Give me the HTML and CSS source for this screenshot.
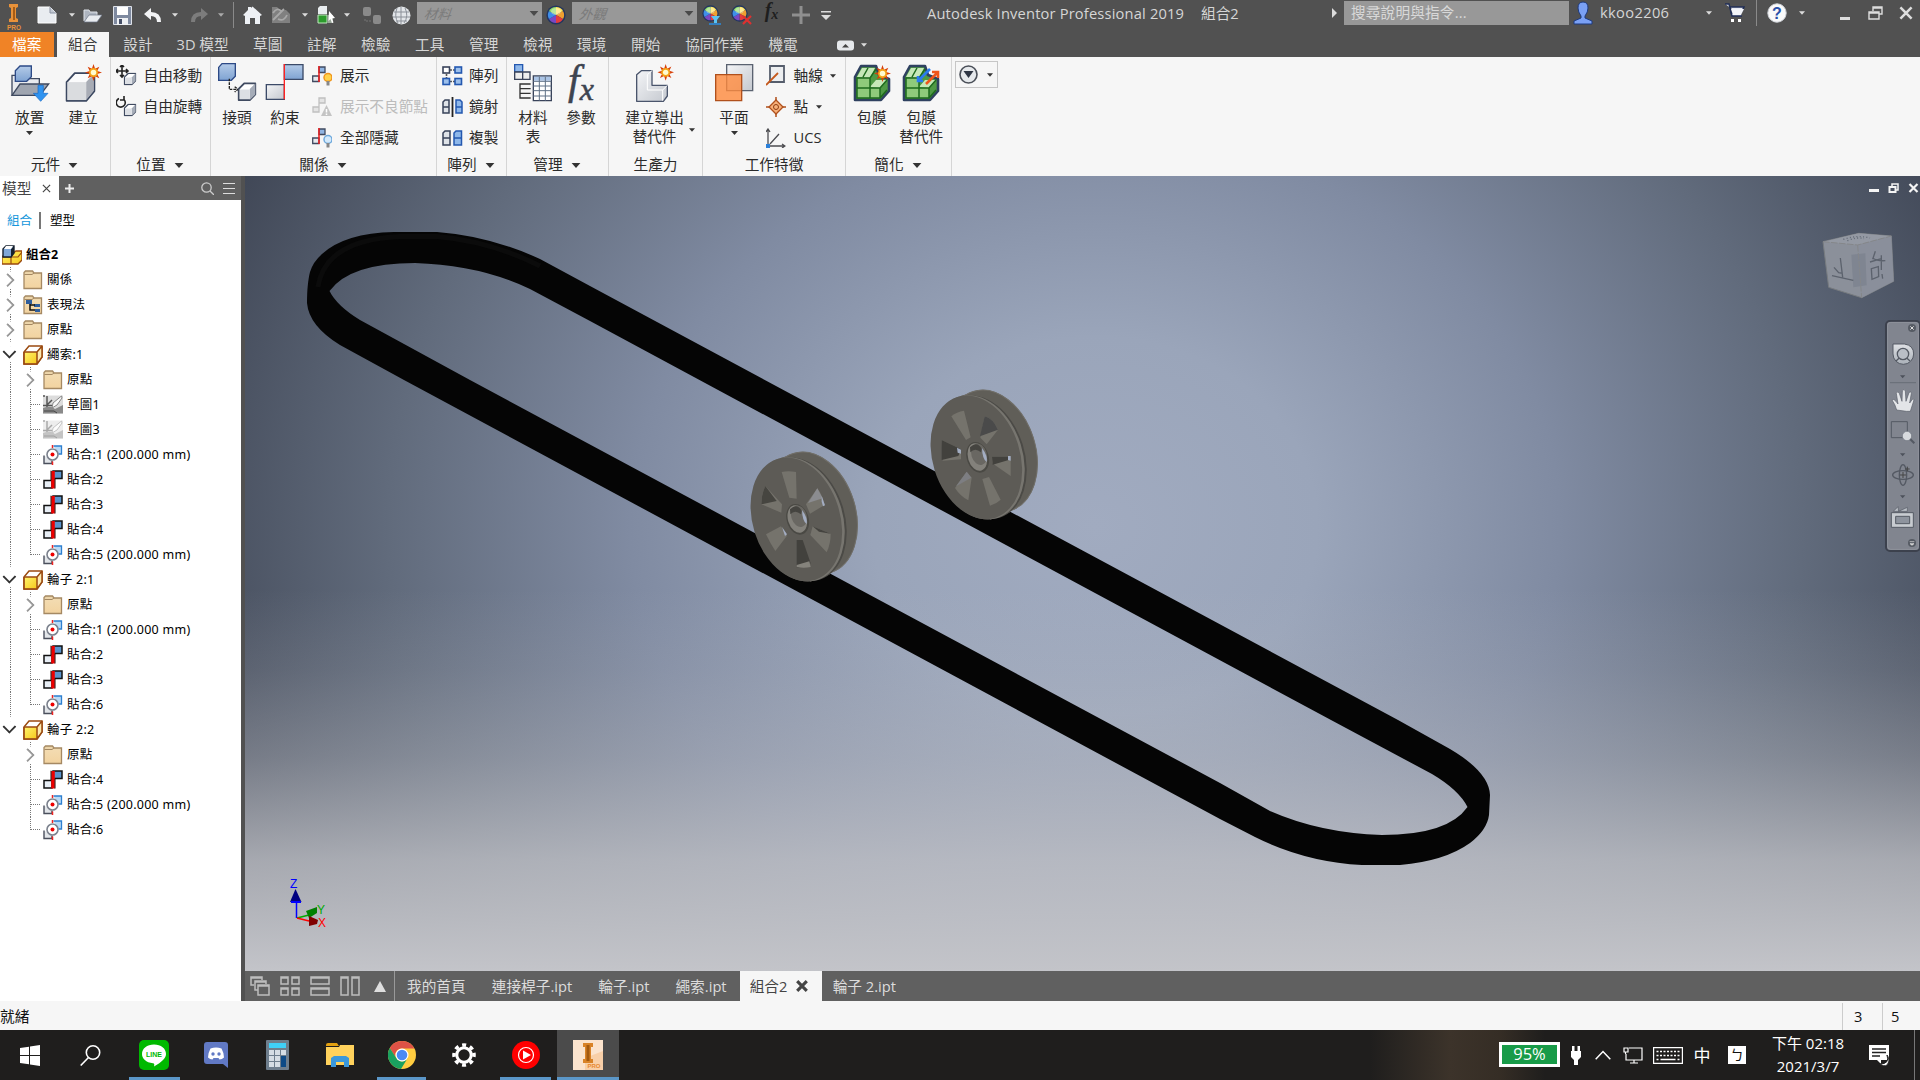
FILE: index.html
```html
<!DOCTYPE html>
<html lang="zh-Hant">
<head>
<meta charset="utf-8">
<title>Autodesk Inventor Professional 2019</title>
<link rel="stylesheet" href="styles.css">
</head>
<body>
<svg class="defs" width="0" height="0">
  <defs>
    <linearGradient id="gBlue" x1="0" y1="0" x2="0" y2="1"><stop offset="0" stop-color="#b4cbe8"/><stop offset="1" stop-color="#7fa3d2"/></linearGradient>
    <linearGradient id="gGrey" x1="0" y1="0" x2="1" y2="1"><stop offset="0" stop-color="#f4f5f7"/><stop offset="1" stop-color="#c4c8cf"/></linearGradient>
    <linearGradient id="gFold" x1="0" y1="0" x2="0" y2="1"><stop offset="0" stop-color="#e6cfa4"/><stop offset=".25" stop-color="#f3dbb0"/><stop offset="1" stop-color="#f2d3a0"/></linearGradient>
    <linearGradient id="gYel" x1="0" y1="0" x2="1" y2="1"><stop offset="0" stop-color="#fff36b"/><stop offset="1" stop-color="#f6c91c"/></linearGradient>
    <linearGradient id="gNav" x1="0" y1="0" x2="0" y2="1"><stop offset="0" stop-color="#dfe1e5"/><stop offset="1" stop-color="#aab0b8"/></linearGradient>
    <symbol id="car" viewBox="0 0 7 4"><path d="M0 0h7L3.5 4z"/></symbol>
    <symbol id="ball" viewBox="0 0 20 20"><circle cx="10" cy="10" r="9.6" fill="#22355f"/><g transform="translate(10 10)"><path d="M0 0L0-8A8 8 0 0 1 7-4z" fill="#ffe25a"/><path d="M0 0L7-4A8 8 0 0 1 7 4z" fill="#f0a030"/><path d="M0 0L7 4A8 8 0 0 1 0 8z" fill="#e43c3c"/><path d="M0 0L0 8A8 8 0 0 1-7 4z" fill="#7a48c4"/><path d="M0 0L-7 4A8 8 0 0 1-7-4z" fill="#3f8ee8"/><path d="M0 0L-7-4A8 8 0 0 1 0-8z" fill="#8fdc6a"/><ellipse cy="-3.5" rx="5" ry="3.6" fill="#fff" opacity=".35"/></g></symbol>
    <symbol id="fold" viewBox="0 0 20 20"><path d="M1 4V2.500L2.500 1h7L11 3h7.500v15.500H1z" fill="url(#gFold)" stroke="#a58963" stroke-width="1.300"/><path d="M1.500 4.500H9L11 3" fill="none" stroke="#a58963"/></symbol>
    <symbol id="part" viewBox="0 0 20 20"><path d="M1 7l5-6h13v11l-5 7H1z" fill="#fff" stroke="#9a4a10" stroke-width="1.500"/><path d="M1.700 7h12.300v11.500H1.700z" fill="url(#gYel)"/><path d="M14 7l5-6v11l-5 7z" fill="#fbe9b0"/><path d="M1 7h13l5-6M14 7v12M1 7v12h13l5-7V1" stroke="#9a4a10" stroke-width="1.500" fill="none"/></symbol>
    <symbol id="mate" viewBox="0 0 20 20"><path d="M1 10.500h8V18H1z" fill="#e8eef5" stroke="#111" stroke-width="1.500"/><path d="M10 1h9v7.500h-9z" fill="#5b94cc" stroke="#111" stroke-width="1.500"/><path d="M8.200 18.500V1h3.600v9v8.500z" fill="#e00"/><path d="M8 10V.700M12 9v9.500" stroke="#200"/></symbol>
    <symbol id="axis" viewBox="0 0 20 20"><path d="M10.500 1h8v8h-3" fill="#b9daf5" stroke="#2d7fd0" stroke-width="1.300"/><path d="M1 10.500V18.500h8v-3" fill="#e3e6ea" stroke="#4a4f5c" stroke-width="1.400"/><circle cx="9.500" cy="9.500" r="5.500" fill="#fff" stroke="#7b818d" stroke-width="1.600"/><circle cx="9.500" cy="9.500" r="2" fill="#e00"/><path d="M9.500 0v3M9.500 16.500v3.500" stroke="#e22" stroke-width="1.500"/></symbol>
    <symbol id="sk" viewBox="0 0 20 20"><path d="M0 .500h20v18H0z" fill="#dcdcdc"/><path d="M4 1v12M0 10.500h9M4 10L9 5M0 1h2" stroke="#555" stroke-width="1.500"/><path d="M18.500 1L10 8l-1 5 5-3 5-7z" fill="#fafafa" stroke="#888"/><path d="M0 13q8-3 12 1l8-4v8.500H0z" fill="#8a8a8a"/><path d="M1 16h10l3 2" stroke="#444" fill="none"/></symbol>
    <symbol id="cube" viewBox="0 0 38 38"><path d="M2 13L12 2h24v22L26 36H2z" fill="#fbfbfc" stroke="#3b4760" stroke-width="2.200" stroke-linejoin="round"/><path d="M3 13h23v22H3z" fill="#dadcdf"/><path d="M26 13L35 3v21l-9 11z" fill="#a8acb5"/></symbol>
    <symbol id="scube" viewBox="0 0 14 14"><path d="M1 5l4-4h8v8l-4 4H1z" fill="#fff" stroke="#3f4a60" stroke-width="1.400" stroke-linejoin="round"/><path d="M9 5v8l4-4V1z" fill="#a5acb8"/><path d="M1.700 5.500H9v7H1.700z" fill="#dcdfe4"/></symbol>
    <symbol id="star" viewBox="-8 -8 16 16"><path d="M0-8L1.500-3.500 5.500-5.500 3.500-1.500 8 0 3.500 1.500 5.500 5.500 1.500 3.500 0 8-1.500 3.500-5.500 5.500-3.500 1.500-8 0-3.500-1.500-5.500-5.500-1.500-3.500z" fill="#d8400a"/><circle r="4.200" fill="#f5a416"/><circle r="2.600" fill="#fffbd0"/></symbol>
    <symbol id="rel" viewBox="0 0 20 20"><path d="M.700 10H7v5.500H.700z" fill="#e6e9ee" stroke="#3f4a60" stroke-width="1.300"/><path d="M7 1h6v5.500H7z" fill="#8fb4e2" stroke="#3f4a60" stroke-width="1.300"/><path d="M7 0v16" stroke="#f01818" stroke-width="1.500"/></symbol>
    <symbol id="simp" viewBox="0 0 38 38"><path d="M2 13L8 2h15l3 9 10 4v12l-8 9H2z" fill="#4f9a44" stroke="#2f4160" stroke-width="2.600" stroke-linejoin="round"/><path d="M4 14h13v10h10v10H4z" fill="#8fca7b"/><path d="M4 13l5-9h13l-5 10M17 23l6-7h11l-7 8" fill="#c6e8b8"/><path d="M4 14h13v10H4zM4 24h13v10H4zM17 24h10v10H17zM17 14l6-9M27 24l7-8M27 34l7-8M10 13l5-9" fill="none" stroke="#1d6a1c" stroke-width="1.500"/></symbol>
    <symbol id="x" viewBox="0 0 10 10"><path d="M1 1l8 8M9 1L1 9" fill="none" stroke="currentColor"/></symbol>
  </defs>
</svg>

<header class="titlebar">
  <div class="qat">
    <span><svg width="16" height="26" viewBox="0 0 16 26"><path d="M3 0h9v3l-2 1v10l2 1v3H3v-3l2-1V4L3 3z" fill="#e8923a"/><path d="M8 3v13" stroke="#a85c14" stroke-width="2"/><text x="8" y="25.500" font-size="6.500" font-weight="700" fill="#e8923a" text-anchor="middle" textLength="14">PRO</text></svg></span>
    <span><svg width="20" height="18" viewBox="0 0 20 18"><path d="M1 1h12l6 6v10H1z" fill="#e9ecf0" stroke="#fff"/><path d="M13 1v6h6" fill="#c2c8d2" stroke="#8b93a3"/></svg></span>
    <span><svg class="c" width="6" height="4"><use href="#car"/></svg></span>
    <span><svg width="19" height="15" viewBox="0 0 19 15"><path d="M1 13V2h5l1 2h7v3" fill="#aeb5c0" stroke="#dfe3e8"/><path d="M1 14L6 7h13l-5 7z" fill="#e9ecf0" stroke="#6d7686" stroke-width=".700"/></svg></span>
    <span><svg width="19" height="19" viewBox="0 0 19 19"><path d="M.500.500h18v18H.500z" fill="#7f8aa0" stroke="#dfe3ea"/><path d="M4 1h11v8H4z" fill="#fff"/><path d="M4 12h11v7H4z" fill="#eef0f3"/><path d="M6 13h3v5H6z" fill="#465068"/></svg></span>
    <span><svg width="18" height="15" viewBox="0 0 18 15"><path d="M0 6L7 0v4q10 0 10 10h-4q0-6-6-6v4z" fill="#f2f3f5"/></svg></span>
    <span><svg class="c" width="6" height="4"><use href="#car"/></svg></span>
    <span><svg width="18" height="15" viewBox="0 0 18 15"><path d="M18 6L11 0v4Q1 4 1 14h4q0-6 6-6v4z" fill="#7c7c7c"/></svg></span>
    <span><svg class="c dim" width="6" height="4"><use href="#car"/></svg></span>
    <span><i class="vsep"></i></span>
    <span><svg width="19" height="19" viewBox="0 0 19 19"><path d="M0 9L5 4V1h3v1l1.500-1.500L19 9l-2 1v8h-5v-6H7v6H2v-8z" fill="#eef1f5"/></svg></span>
    <span><svg width="20" height="18" viewBox="0 0 20 18"><path d="M1 1h5l3 3h6l4 4v9H1z" fill="#808080"/><path d="M2 14L13 3M7 13q6 3 9-4M2 7q4-6 8-2" stroke="#a8a8a8" stroke-width="1.800" fill="none"/></svg></span>
    <span><svg class="c" width="6" height="4"><use href="#car"/></svg></span>
    <span><svg width="19" height="18" viewBox="0 0 19 18"><path d="M1 2l2-2h7v8H1z" fill="#e8ecef"/><path d="M1 9h9v8H1z" fill="#2c9a2c" stroke="#bfe8bf"/><path d="M11 9h5v8h-5z" fill="#9aa89a"/><path d="M12 5l6 7-3 .500 1.500 4-1.500.500-1.500-4-2 2z" fill="#fff"/></svg></span>
    <span><svg class="c" width="6" height="4"><use href="#car"/></svg></span>
    <span><svg width="19" height="19" viewBox="0 0 19 19"><rect x="1" y="1" width="8" height="9" rx="2" fill="#8a8a8a"/><rect x="11" y="9" width="8" height="9" rx="2" fill="#8a8a8a"/><path d="M3 13v2h6" stroke="#777" fill="none" stroke-dasharray="2 1"/></svg></span>
    <span><svg width="19" height="19" viewBox="0 0 19 19"><circle cx="9.500" cy="9.500" r="9" fill="#e3e6e9"/><path d="M2 6h15M1 11h17M4 15h11M9 1v17M5 2q-3 8 1 15M13 2q4 8-1 15" stroke="#8b9098" fill="none"/></svg></span>
    <div class="combo"><em>材料</em><svg width="10" height="5"><use href="#car"/></svg></div>
    <span><svg width="20" height="20"><use href="#ball"/></svg></span>
    <div class="combo"><em>外觀</em><svg width="10" height="5"><use href="#car"/></svg></div>
    <span><svg width="20" height="20" viewBox="0 0 20 20"><use href="#ball" width="17" height="17"/><path d="M9 11h9l-3 4v3h-3v-3z" fill="#5cc4f4"/><path d="M7 19h12" stroke="#2a8ce0" stroke-width="1.500"/></svg></span>
    <span><svg width="21" height="20" viewBox="0 0 21 20"><use href="#ball" width="17" height="17"/><path d="M12 11l8 8M20 11l-8 8" stroke="#e03030" stroke-width="2.200"/></svg></span>
    <span class="fx">f<sub>x</sub></span>
    <span><svg width="18" height="18" viewBox="0 0 18 18"><path d="M9 0v18M0 9h18" stroke="#8f8f8f" stroke-width="3"/></svg></span>
    <span><svg class="c" width="10" height="9" viewBox="0 0 10 9"><path d="M0 0h10v1.500H0zM0 4h10L5 9z"/></svg></span>
  </div>
  <div class="apptitle">Autodesk Inventor Professional 2019</div>
  <div class="docname">組合2</div>
  <div class="info">
    <span><svg class="c" width="5" height="10" viewBox="0 0 5 10"><path d="M0 0v10l5-5z"/></svg></span>
    <div class="search">搜尋說明與指令...</div>
    <span><svg width="20" height="24" viewBox="0 0 20 24"><path d="M10 1q5 0 5 6 0 4-3 8v2l7 3v3H1v-3l7-3v-2Q5 11 5 7q0-6 5-6z" fill="#7aa0f4" stroke="#1d3a80"/></svg></span>
    <div class="user">kkoo2206</div>
    <span><svg class="c" width="6" height="4"><use href="#car"/></svg></span>
    <span><svg width="20" height="20" viewBox="0 0 20 20"><path d="M0 1h4l3 12h10M5 4h14l-3 6H6z" fill="#e7eaf2" stroke="#1f2d55" stroke-width="1.500"/><path d="M6 6l2 6h8l3-6z" fill="#f2f4f8"/><path d="M6 16h3v3H6zM13 16h3v3h-3z" fill="#fff"/></svg></span>
    <span><i class="vsep"></i></span>
    <span><svg width="20" height="20" viewBox="0 0 20 20"><circle cx="10" cy="10" r="9.200" fill="#fafafa" stroke="#d0d4da"/><text x="10" y="15.500" text-anchor="middle" font-size="16" font-weight="700" fill="#2a50a8">?</text></svg></span>
    <span><svg class="c" width="6" height="4"><use href="#car"/></svg></span>
    <span class="min"><svg width="10" height="3"><path d="M0 0h10v3H0z" fill="#ddd"/></svg></span>
    <span><svg width="15" height="14" viewBox="0 0 15 14" fill="none" stroke="#ddd"><path d="M5 5V1h9v7h-3M5 2h9" stroke-width="1.400"/><path d="M1 6h10v7H1zM1 7h10" stroke-width="1.400"/></svg></span>
    <span><svg class="lt" width="14" height="14"><use href="#x" stroke-width="1.800"/></svg></span>
  </div>
</header>

<nav class="tabs">
  <b class="file">檔案</b><b class="on">組合</b><b>設計</b><b>3D 模型</b><b>草圖</b><b>註解</b><b>檢驗</b><b>工具</b><b>管理</b><b>檢視</b><b>環境</b><b>開始</b><b>協同作業</b><b>機電</b>
  <svg class="rmin" width="17" height="11" viewBox="0 0 17 11"><rect width="17" height="10" y=".500" rx="3" fill="#e6e9ec"/><path d="M5 7.500h7L8.500 4z" fill="#444"/></svg>
  <svg class="c" width="6" height="4"><use href="#car"/></svg>
</nav>

<section class="ribbon">
  <div class="panel p1">
    <div class="body">
      <div class="big"><svg width="40" height="42" viewBox="30 186 120 126"><path d="M36 286V226h22l6 10h54v20" fill="#e8eaee" stroke="#3f4a60" stroke-width="4"/><path d="M36 286l24-34h86l-26 34z" fill="#9fa5b0" stroke="#3f4a60" stroke-width="4"/><path d="M46 212l14-14h34v32l-14 14H46z" fill="url(#gBlue)" stroke="#2d4a86" stroke-width="4"/><path d="M114 256h16v24h14l-22 24-22-24h14z" fill="#2f93f0" stroke="#1668c4" stroke-width="2"/></svg><label>放置</label><svg class="k" width="7" height="4"><use href="#car"/></svg></div>
      <div class="big"><svg width="40" height="42" viewBox="0 0 40 42"><use href="#cube" x="2" y="9" width="31" height="32"/><use href="#star" x="22" y="2" width="17" height="17"/></svg><label>建立</label></div>
    </div>
    <h4>元件<svg width="10" height="5"><use href="#car"/></svg></h4>
  </div>
  <div class="panel p2">
    <div class="body"><div class="small">
      <div><svg width="21" height="21" viewBox="0 0 21 21"><path d="M6 0v12M0 6h12M4 2l2-2 2 2M4 10l2 2 2-2M2 4L0 6l2 2M10 4l2 2-2 2" fill="none" stroke="#222" stroke-width="1.600"/><use href="#scube" x="7.500" y="7.500" width="13" height="13"/></svg>自由移動</div>
      <div><svg width="21" height="21" viewBox="0 0 21 21"><path d="M3 2.500a4.500 4.500 0 1 0 5 1M8 0v4h-4" fill="none" stroke="#222" stroke-width="1.600"/><use href="#scube" x="7.500" y="7.500" width="13" height="13"/></svg>自由旋轉</div>
    </div></div>
    <h4>位置<svg width="10" height="5"><use href="#car"/></svg></h4>
  </div>
  <div class="panel p3">
    <div class="body">
      <div class="big"><svg width="40" height="42" viewBox="651 186 120 126"><path d="M656 202l10-11h40v38l-12 12h-38z" fill="url(#gBlue)" stroke="#2d4a86" stroke-width="4"/><path d="M688 236v32h24M704 260l10 8-10 8" fill="none" stroke="#222" stroke-width="4" stroke-dasharray="8 3"/><use href="#scube" x="712" y="246" width="58" height="58"/></svg><label>接頭</label></div>
      <div class="big"><svg width="40" height="42" viewBox="796 186 120 126"><path d="M854 194h56v44h-56z" fill="url(#gBlue)" stroke="#3b4a68" stroke-width="4"/><path d="M800 254h54v44h-54z" fill="url(#gGrey)" stroke="#3b4a68" stroke-width="4"/><path d="M854 192v106" stroke="#f22" stroke-width="4"/></svg><label>約束</label></div>
      <div class="small">
        <div><svg width="20" height="20" viewBox="0 0 20 20"><use href="#rel"/><circle cx="16" cy="11.500" r="4" fill="#ffd24a" stroke="#f0941c" stroke-width="1.500"/><path d="M14.500 15h3v4.500h-3z" fill="#888"/></svg>展示</div>
        <div class="off"><svg width="20" height="20" viewBox="0 0 20 20"><path d="M1 10h6v5H1zM7 1h6v5H7zM7 1v14" fill="#e4e4e4" stroke="#c0c0c0" stroke-width="1.300"/><path d="M14.500 8l5.500 11H9z" fill="#c4c4c4"/><path d="M14.500 12v3.500m0 1v1.500" stroke="#fff" stroke-width="1.500"/></svg>展示不良節點</div>
        <div><svg width="20" height="20" viewBox="0 0 20 20"><use href="#rel"/><circle cx="16" cy="11.500" r="4" fill="#d4eafc" stroke="#6ea9dc" stroke-width="1.500"/><path d="M14.500 15h3v4.500h-3z" fill="#888"/></svg>全部隱藏</div>
      </div>
    </div>
    <h4>關係<svg width="10" height="5"><use href="#car"/></svg></h4>
  </div>
  <div class="panel p4">
    <div class="body"><div class="small">
      <div><svg width="21" height="20" viewBox="0 0 21 20" stroke-width="1.600"><path d="M5 4h11M4.500 5v10M5 15.500h11" stroke="#555" stroke-dasharray="2 1"/><rect x="1" y="1" width="6.500" height="6" fill="#fff" stroke="#39435a"/><rect x="13" y="1" width="6.500" height="6" fill="#9dc0ec" stroke="#2458b0"/><rect x="1" y="12.500" width="6.500" height="6" fill="#9dc0ec" stroke="#2458b0"/><rect x="13" y="12.500" width="6.500" height="6" fill="#9dc0ec" stroke="#2458b0"/></svg>陣列</div>
      <div><svg width="21" height="20" viewBox="0 0 21 20" stroke-width="1.500"><path d="M1 5l2-2h4v13H1zM1 10h6" fill="#dfe3e8" stroke="#39435a"/><path d="M20 5l-2-2h-4v13h6zM20 10h-6" fill="#8fb8ea" stroke="#2458b0"/><path d="M10.500 0v20" stroke="#222" stroke-width="1.800"/></svg>鏡射</div>
      <div><svg width="21" height="20" viewBox="0 0 21 20" stroke-width="1.500"><path d="M1 5l2-2h5v14H1zM1 10h7" fill="#dfe3e8" stroke="#39435a"/><path d="M12 5l2-2h5.500v14H12zM12 10h7.500" fill="#8fb8ea" stroke="#2458b0"/></svg>複製</div>
    </div></div>
    <h4>陣列<svg width="10" height="5"><use href="#car"/></svg></h4>
  </div>
  <div class="panel p5">
    <div class="body">
      <div class="big"><svg width="40" height="42" viewBox="99 186 120 126" stroke-width="4"><path d="M104 194h24v22h-24z" fill="#8fb8ea" stroke="#2458b0"/><path d="M104 216h24v22h-24zM128 216h22v22h-22z" fill="#eee" stroke="#39435a"/><path d="M120 250v46M120 252h32M120 266h32M120 280h32M120 294h32" stroke="#333"/><path d="M160 228h54v74h-54z" fill="#fff" stroke="#39435a"/><path d="M162 230h50v12h-50z" fill="#aac4e6"/><path d="M178 230v72M196 230v72M160 244h54M160 258h54M160 272h54M160 288h54" stroke="#5f7186" stroke-width="3"/></svg><label>材料<br>表</label></div>
      <div class="big"><span class="bigfx">f<sub>x</sub></span><label>參數</label></div>
    </div>
    <h4>管理<svg width="10" height="5"><use href="#car"/></svg></h4>
  </div>
  <div class="panel p6">
    <div class="body">
      <div class="big"><svg width="40" height="42" viewBox="465 186 120 126"><path d="M470 224l14-12h32v44h46v32l-12 16h-80z" fill="url(#gGrey)" stroke="#4a556c" stroke-width="4" stroke-linejoin="round"/><path d="M502 224v46h46l14-14M502 224l14-12M548 270v32" fill="none" stroke="#fff" stroke-width="3"/><use href="#star" x="532" y="192" width="50" height="50"/></svg><label>建立導出<br>替代件</label></div>
      <svg class="k side" width="6" height="4"><use href="#car"/></svg>
    </div>
    <h4>生產力</h4>
  </div>
  <div class="panel p7">
    <div class="body">
      <div class="big"><svg width="40" height="42" viewBox="702 186 120 126" stroke-width="4"><path d="M740 194h78v78h-78z" fill="url(#gGrey)" stroke="#5a6270"/><path d="M707 224h78v78h-78z" fill="#ff8a3c" fill-opacity=".8" stroke="#b0501c"/></svg><label>平面</label><svg class="k" width="7" height="4"><use href="#car"/></svg></div>
      <div class="small">
        <div><svg width="20" height="21" viewBox="0 0 20 21"><path d="M4 1h14v16H4z" fill="#eceef0" stroke="#555d6c" stroke-width="1.800"/><path d="M0 20L12 8" stroke="#c4581c" stroke-width="1.800"/></svg>軸線<svg class="k" width="6" height="4"><use href="#car"/></svg></div>
        <div><svg width="20" height="20" viewBox="0 0 20 20"><path d="M10 0v20M0 10h20" stroke="#b0501c" stroke-width="1.500"/><path d="M10 3l7 7-7 7-7-7z" fill="#f7b07a" stroke="#b0501c" stroke-width="1.300"/><circle cx="10" cy="10" r="2.500" fill="#f7b07a" stroke="#8c3c10"/></svg>點<svg class="k" width="6" height="4"><use href="#car"/></svg></div>
        <div><svg width="20" height="20" viewBox="0 0 20 20"><path d="M2 1v17h17M0 4l2-3 2 3M16 16l3 2-3 2M4 16L13 6" fill="none" stroke="#4c4c50" stroke-width="1.300"/><path d="M0 16h4v4H0z" fill="#2a7fd8"/></svg><span>UCS</span></div>
      </div>
    </div>
    <h4>工作特徵</h4>
  </div>
  <div class="panel p8">
    <div class="body">
      <div class="big"><svg width="40" height="42" viewBox="0 0 40 42"><use href="#simp" x="1" y="2" width="38" height="38"/><use href="#star" x="22" y="3" width="17" height="17"/></svg><label>包膜</label></div>
      <div class="big"><svg width="40" height="42" viewBox="0 0 40 42"><use href="#simp" x="1" y="2" width="38" height="38"/><path d="M29 7L18 18M17 14v5h5" stroke="#2a7af0" stroke-width="2.600" fill="none"/><path d="M25 22L36 11M31 10h6v6" stroke="#f0561c" stroke-width="2.600" fill="none"/></svg><label>包膜<br>替代件</label></div>
    </div>
    <h4>簡化<svg width="10" height="5"><use href="#car"/></svg></h4>
  </div>
  <div class="filter"><svg width="19" height="19" viewBox="0 0 19 19"><circle cx="9.500" cy="9.500" r="8.500" fill="#e6e9ec" stroke="#4a4f58" stroke-width="1.600"/><path d="M4.500 6h10l-5 7z" fill="#2e3644"/></svg><svg class="k" width="6" height="4"><use href="#car"/></svg></div>
</section>

<main>
  <aside>
    <div class="phead"><div class="ptab">模型<svg width="9" height="9"><use href="#x" stroke-width="1.300"/></svg></div><svg class="plus" width="9" height="9" viewBox="0 0 9 9"><path d="M4.500 0v9M0 4.500h9" stroke="#eee" stroke-width="2"/></svg><svg class="mag" width="13" height="13" viewBox="0 0 13 13" fill="none" stroke="#ccc" stroke-width="1.300"><circle cx="5.500" cy="5.500" r="4.700"/><path d="M9 9l4 4"/></svg><svg width="12" height="11" viewBox="0 0 12 11"><path d="M0 .500h12M0 5.500h12M0 10.500h12" stroke="#ddd"/></svg></div>
    <div class="mode"><a>組合</a><i></i><span>塑型</span></div>
    <ul class="tree">
      <li class="root"><svg width="20" height="20" viewBox="0 0 20 20"><path d="M0 12l3-3h7l4-3h6v9l-4 4H0z" fill="url(#gYel)" stroke="#9a4a10" stroke-width="1.300"/><path d="M9 11v8M1 12h15l4-5" stroke="#9a4a10" stroke-width="1.200" fill="none"/><path d="M1 4l3-3h8v7l-3 4H1z" fill="#7fa7d8" stroke="#16202e" stroke-width="1.400"/><path d="M9 4v8l3-4V1z" fill="#16202e"/><path d="M2 4l2-3h7L9 4z" fill="#fff"/></svg>組合2</li>
      <li><i class="l r"></i><svg><use href="#fold"/></svg>關係</li>
      <li><i class="l r"></i><svg viewBox="0 0 20 20"><use href="#fold"/><path d="M3 5h6v4H3zM11 9h6v3h-6zM12 14h5v3h-5z" fill="#2f5e9c"/><path d="M7 9v6h5M7 10h5" stroke="#111" stroke-width="1.500" fill="none"/></svg>表現法</li>
      <li><i class="l r"></i><svg><use href="#fold"/></svg>原點</li>
      <li><i class="l d"></i><svg><use href="#part"/></svg>繩索:1</li>
      <li><i class="l"></i><i class="l r"></i><svg><use href="#fold"/></svg>原點</li>
      <li><i class="l"></i><i class="l t"></i><svg><use href="#sk"/></svg>草圖1</li>
      <li><i class="l"></i><i class="l t"></i><svg class="faint"><use href="#sk"/></svg>草圖3</li>
      <li><i class="l"></i><i class="l t"></i><svg><use href="#axis"/></svg>貼合:1 (200.000 mm)</li>
      <li><i class="l"></i><i class="l t"></i><svg><use href="#mate"/></svg>貼合:2</li>
      <li><i class="l"></i><i class="l t"></i><svg><use href="#mate"/></svg>貼合:3</li>
      <li><i class="l"></i><i class="l t"></i><svg><use href="#mate"/></svg>貼合:4</li>
      <li><i class="l"></i><i class="l t e"></i><svg><use href="#axis"/></svg>貼合:5 (200.000 mm)</li>
      <li><i class="l d"></i><svg><use href="#part"/></svg>輪子 2:1</li>
      <li><i class="l"></i><i class="l r"></i><svg><use href="#fold"/></svg>原點</li>
      <li><i class="l"></i><i class="l t"></i><svg><use href="#axis"/></svg>貼合:1 (200.000 mm)</li>
      <li><i class="l"></i><i class="l t"></i><svg><use href="#mate"/></svg>貼合:2</li>
      <li><i class="l"></i><i class="l t"></i><svg><use href="#mate"/></svg>貼合:3</li>
      <li><i class="l"></i><i class="l t e"></i><svg><use href="#axis"/></svg>貼合:6</li>
      <li><i class="l d e"></i><svg><use href="#part"/></svg>輪子 2:2</li>
      <li><i></i><i class="l r"></i><svg><use href="#fold"/></svg>原點</li>
      <li><i></i><i class="l t"></i><svg><use href="#mate"/></svg>貼合:4</li>
      <li><i></i><i class="l t"></i><svg><use href="#axis"/></svg>貼合:5 (200.000 mm)</li>
      <li><i></i><i class="l t e"></i><svg><use href="#axis"/></svg>貼合:6</li>
    </ul>
  </aside>
  <div class="work">
    <svg class="scene" width="1675" height="795" viewBox="245 176 1675 795">
      <!-- belt -->
      <path fill="#050505" fill-rule="evenodd" d="M307 303C307 290 308 280 310 272Q313 262 322 254Q345 233 394 232H437Q490 236 540 259L590 286L1398 720L1450 749Q1489 772 1490 795L1489 815Q1487 830 1470 843Q1445 861 1400 865H1362Q1305 862 1255 837L1220 819L404 380L340 345Q309 326 307 303ZM329.500 291Q350 263 415 263Q480 265 530 289L590 321L1331 720L1432 774Q1459 790 1467.500 807Q1448 835 1382 835Q1320 833 1270 811L1220 783L470 380L360 320Q337 306 329.500 291Z"/>
      <path fill="none" stroke="#0b0b0b" stroke-width="5" d="M318 287Q325 240 400 236.500H437Q490 241 540 266"/>
      <!-- wheels, drawn at three times size -->
      <g transform="translate(730 371) scale(.33333)">
        <g id="wheelbase">
          <ellipse cx="246" cy="426" rx="131" ry="188" transform="rotate(-17.500 246 426)" fill="#605e58"/>
          <path d="M150 262L208 244 300 610 240 632z" fill="#605e58"/>
          <ellipse cx="246" cy="426" rx="130" ry="187" transform="rotate(-17.500 246 426)" fill="none" stroke="#716f69" stroke-width="3"/>
          <ellipse cx="212" cy="445" rx="132" ry="190" transform="rotate(-17.500 212 445)" fill="#4b4a46"/>
          <ellipse cx="205" cy="445" rx="133" ry="191" transform="rotate(-17.500 205 445)" fill="#77756f"/>
          <ellipse cx="199" cy="445" rx="131" ry="190" transform="rotate(-17.500 199 445)" fill="#5d5b56"/>
          <ellipse cx="203" cy="445" rx="33" ry="47" transform="rotate(-17 203 445)" fill="#4a4944"/>
          <ellipse cx="202" cy="444" rx="28" ry="42" transform="rotate(-17 202 444)" fill="#83817b"/>
          <ellipse cx="207" cy="436" rx="23" ry="33" transform="rotate(-17 207 436)" fill="#696762"/>
          <path d="M180 415q22-20 35 5l-2 10q-18-16-32 0z" fill="#454440"/>
          <path d="M216 417q18 24 14 42-13-8-14-42z" fill="#a3adc2"/>
        </g>
        <g fill="#75736c">
          <path d="M155 303q20-5 43 0l2 80-22-3z"/>
          <path d="M106 345q-12 25-12 55l60 25 2-25z"/><path d="M106 345q-12 25-12 55l46-10z" fill="#464540"/>
          <path d="M262 352q14 18 22 50l-44 26-12-28z"/><path d="M262 352l16 30-44 14z" fill="#8b8c90"/><path d="M275 375l10 28-6 3-4-14z" fill="#a3adc2"/>
          <path d="M108 490l45-24 18 28-35 46q-16-24-28-50z"/><path d="M156 468l15 22-6 5z" fill="#a3adc2"/>
          <path d="M248 466l54 22q0 30-12 56l-49-52z"/><path d="M248 466l54 22-35-6z" fill="#44433f"/>
          <path d="M200 507h18l24 70q-20 14-42 12z" fill="#42413d"/><path d="M200 582l38-11 4 17q-20 5-42 0z" fill="#85837c"/>
        </g>
        <use href="#wheelbase" x="540" y="-186"/>
        <g fill="#75736c">
          <path d="M664 136q16-14 38-17l20 80-14 8z"/>
          <path d="M764 136q25 6 40 40l-34 44-19-20z"/><path d="M764 136q25 6 40 40l-54 20z" fill="#4a4a4a"/>
          <path d="M635 207l58 28v30l-55 4z"/><path d="M635 207l58 28-8 20-50 12z" fill="#42413d"/><path d="M681 230l12 6v12l-10-3z" fill="#a3adc2"/>
          <path d="M786 257l56 0v58l-55-38z"/><path d="M786 257h48l2 10-48 14z" fill="#42413d"/><path d="M834 255h8v14l-8-2z" fill="#a3adc2"/>
          <path d="M710 302l15 18-10 68q-24-12-40-37z"/><path d="M710 302l14 18-46 26z" fill="#7d7e82"/>
          <path d="M757 324l20-6 35 68q-12 12-32 18z"/>
        </g>
      </g>
      <!-- view cube and navigation bar -->
      <g transform="translate(1780 200) scale(.33333)">
        <path d="M129 125L236 100 334 108 341 244 245 293 146 262z" fill="#8b909a" stroke="#777b80" stroke-width="3"/>
        <path d="M129 125L236 100 334 108 233 135z" fill="#9499a3"/><path d="M233 135L334 108 341 244 245 293z" fill="#8a8f9b"/>
        <path d="M214 164l42-4 4 96-40 6z" fill="#7f8591"/>
        <path d="M129 125l104 10 101-27M233 135l12 158" stroke="#85878a" stroke-width="3" fill="none" stroke-dasharray="20 4"/>
        <path d="M190 118q40-14 80-4m-68 8q30-12 50-6" stroke="#626975" stroke-width="4" stroke-dasharray="3 7" fill="none"/>
        <path d="M181 174l7 58M162 202l14 16 12 2M156 227l64 14M286 154l-8 24M304 166v44M278 174q14 10 38 8M270 186l34-10M274 206l2 32 20-8-1-30zM306 222l2 14" stroke="#5c626d" stroke-width="4" fill="none"/>
        <rect x="318" y="363" width="102" height="690" rx="12" fill="#81858f" stroke="#3c414d" stroke-width="6"/><rect x="323" y="367" width="92" height="681" rx="9" fill="none" stroke="#959aa3" stroke-width="2"/>
        <circle cx="396" cy="384" r="12" fill="#565b64"/><path d="M391 379l10 10M401 379l-10 10" stroke="#ddd" stroke-width="3"/>
        <circle cx="396" cy="1029" r="12" fill="#565b64"/><path d="M389 1025h14M390 1031h12l-6 5z" stroke="#ddd" stroke-width="2" fill="#ddd"/>
        <path d="M339 432h34q28 4 28 30a31 31 0 0 1-62 0z" fill="url(#gNav)" stroke="#545963" stroke-width="3"/><circle cx="369" cy="462" r="17" fill="#b9bec6" stroke="#545963" stroke-width="4"/><path d="M357 475l-9 8M381 475l9 8" stroke="#545963" stroke-width="4"/>
        <path d="M330 548h78" stroke="#5b606a" stroke-width="2"/><path d="M360 526h16l-8 9zM360 760h16l-8 9zM360 886h16l-8 9z" fill="#4d525c"/>
        <path d="M350 630q-4-16-14-30 5-5 12 4l6 8-5-32q4-9 9 0l8 24 1-31q5-9 9 0l2 31 9-26q6-7 7 2l-5 29 9-12q6-2 3 6l-10 31-12 0z" fill="#e3e5e8" stroke="#5a5f69" stroke-width="2"/>
        <path d="M334 665h48v48h-48z" fill="none" stroke="#545963" stroke-width="3"/><circle cx="381" cy="708" r="14" fill="#d7dade" stroke="#6c727d" stroke-width="2"/><path d="M391 718l12 12" stroke="#545963" stroke-width="6"/>
        <g fill="none" stroke="#545963" stroke-width="4"><ellipse cx="369" cy="825" rx="31" ry="13"/><ellipse cx="369" cy="825" rx="11" ry="31"/></g><path d="M369 816v18M360 825h18M382 800v14M375 807h14" stroke="#444" stroke-width="3"/>
        <path d="M334 938h66v44h-66z" fill="#c8ccd1" stroke="#545963" stroke-width="3"/><path d="M347 949h42v22h-42z" fill="#8e949e" stroke="#545963" stroke-width="3"/><path d="M340 934l14-14 2 14 26-12v12z" fill="#b9bec5" stroke="#545963" stroke-width="2"/>
      </g>
      <!-- document window buttons -->
      <g stroke="#f4f4f4" fill="none"><path d="M1869 190.500h10" stroke-width="3"/><path d="M1892 187v-3h6v6h-2" stroke-width="1.500"/><path d="M1889.500 187h6v5h-6z" stroke-width="2"/><path d="M1909.500 184l8 8M1917.500 184l-8 8" stroke-width="2.200"/></g>
      <!-- axis triad -->
      <path d="M296.500 918v-24" stroke="#00f" stroke-width="1.500"/><path d="M290 902l5.500-13 6 13z" fill="#000080"/><path d="M291 902h10" stroke="#00f" stroke-width="2"/>
      <path d="M297 918l12-3" stroke="#0a0" stroke-width="1.500"/><path d="M306 911l11-4v6l-8 5z" fill="#008000"/>
      <path d="M297 918l12 3" stroke="#f00" stroke-width="1.500"/><path d="M309 916l9 4-1 4-8 2z" fill="#800000"/>
      <g font-size="12"><text x="290" y="888" fill="#00f">Z</text><text x="317" y="914" fill="#0a0">Y</text><text x="318" y="927" fill="#f00">X</text></g>
    </svg>
    <div class="docs">
      <div class="arr">
        <svg width="20" height="20" viewBox="0 0 20 20"><path d="M12 4V1H1v8h3M16 8V5H5v9h3M8 9h11v10H8zM1 2h11M5 6h11M8 10h11"/></svg>
        <svg width="20" height="20" viewBox="0 0 20 20"><path d="M1 1h7v7H1zM12 1h7v7h-7zM1 12h7v7H1zM12 12h7v7h-7zM1 2h7M12 2h7M1 13h7M12 13h7"/></svg>
        <svg width="20" height="20" viewBox="0 0 20 20"><path d="M1 1h18v7H1zM1 12h18v7H1zM1 2h18M1 13h18"/></svg>
        <svg width="20" height="20" viewBox="0 0 20 20"><path d="M1 1h7v18H1zM12 1h7v18h-7zM1 2h7M12 2h7"/></svg>
        <svg class="up" width="12" height="11" viewBox="0 0 12 11"><path d="M6 0l6 11H0z"/></svg>
      </div>
      <b>我的首頁</b><b>連接桿子.ipt</b><b>輪子.ipt</b><b>繩索.ipt</b><b class="on">組合2<svg width="12" height="12"><use href="#x" stroke-width="2.600"/></svg></b><b class="last">輪子 2.ipt</b>
    </div>
  </div>
</main>

<div class="status"><span>就緒</span><b>3</b><b>5</b></div>

<footer>
  <div class="apps">
    <span><svg width="20" height="21" viewBox="0 0 20 21"><path d="M0 3l9-1.300V10H0zM10 1.500L20 0v10H10zM0 11h9v8.300L0 18zM10 11h10v10l-10-1.500z" fill="#fff"/></svg></span>
    <span><svg width="21" height="21" viewBox="0 0 21 21" fill="none" stroke="#fff" stroke-width="1.600"><circle cx="13" cy="7.500" r="6.700"/><path d="M8.500 12.500L.700 20.500"/></svg></span>
    <span class="run"><svg width="30" height="30" viewBox="0 0 30 30"><rect width="30" height="30" rx="5" fill="#00b900"/><path d="M15 4.500c7 0 12 4 12 9.500 0 4-4 8-12 12.500.500-2 .500-3-1-3.200C7 22.500 3 18.500 3 14c0-5.500 5-9.500 12-9.500z" fill="#fff"/><text x="15" y="16.500" font-size="7" font-weight="700" fill="#00b900" text-anchor="middle">LINE</text></svg></span>
    <span><svg width="24" height="26" viewBox="0 0 24 26"><path d="M3 0h18q3 0 3 3v23l-5-4H3q-3 0-3-3V3q0-3 3-3z" fill="#6179c4"/><path d="M6.500 6.500Q12 4.500 17.500 6.500 20 11 20 15.500q-2 2-4.500 2l-1-1.500h-5l-1 1.500q-2.500 0-4.500-2Q4 11 6.500 6.500z" fill="#fff"/><circle cx="9" cy="12" r="1.700" fill="#6179c4"/><circle cx="15" cy="12" r="1.700" fill="#6179c4"/></svg></span>
    <span><svg width="23" height="30" viewBox="0 0 23 30"><rect width="23" height="30" rx="1" fill="#6e7e8d"/><path d="M3 3h17v5H3z" fill="#40d0f8"/><path d="M3 10h5v5H3zM9 10h5v5H9zM15 10h5v5h-5zM3 16h5v5H3zM9 16h5v5H9zM3 22h5v5H3zM9 22h5v5H9z" fill="#d5dde4"/><path d="M15 16h5v11h-5z" fill="#0d4a86"/></svg></span>
    <span><svg width="28" height="24" viewBox="0 0 28 24"><path d="M0 2q0-2 2-2h9l2 3H0z" fill="#e2a010"/><path d="M0 4h13l1-2h14v20H0z" fill="#ffd25c"/><path d="M5 24v-9l3-2h12l3 2v9h-5v-5h-8v5z" fill="#3a98dc"/></svg></span>
    <span class="run more"><svg width="28" height="28" viewBox="-14 -14 28 28"><circle r="14" fill="#ffcd40"/><path d="M0-14A14 14 0 0 1 12.500-6.500H0A6.500 6.500 0 0 0-6 3L-12.200-7A14 14 0 0 1 0-14z" fill="#de5246"/><path d="M-12.200-7A14 14 0 0 0-1 14L5.600 3.200A6.500 6.500 0 0 1-5.600 3.200z" fill="#1aa15f"/><circle r="6.500" fill="#fff"/><circle r="5.300" fill="#4a8af4"/></svg></span>
    <span><svg width="24" height="24" viewBox="-12 -12 24 24"><circle r="7.200" fill="none" stroke="#fff" stroke-width="3"/><circle r="10" fill="none" stroke="#fff" stroke-width="3.600" stroke-dasharray="3.900 3.954" transform="rotate(-12)"/></svg></span>
    <span class="run"><svg width="28" height="28" viewBox="-14 -14 28 28"><circle r="14" fill="#f00"/><circle r="7.500" fill="none" stroke="#fff" stroke-width="1.200"/><path d="M-3-4.500L5 0-3 4.500z" fill="#fff"/></svg></span>
    <span class="run cur"><svg width="30" height="30" viewBox="0 0 30 30"><path d="M0 0h30v30H0z" fill="#fbe3cd"/><path d="M12 18l18-7v19H12z" fill="#f8cfa8"/><path d="M10 3h10v4h-2v12h2v4H10v-4h2V7h-2z" fill="#d98328"/><path d="M15 5v16" stroke="#a3590f" stroke-width="3"/><text x="21" y="28" font-size="6" font-weight="700" fill="#e8892f" text-anchor="middle">PRO</text></svg></span>
  </div>
  <div class="tray">
    <div class="bat">95%</div>
    <span><svg width="12" height="19" viewBox="0 0 12 19"><path d="M2 0h2.500v5h3V0H10v5h1v6l-3 3v5H4v-5l-3-3V5h1z" fill="#fff"/></svg></span>
    <span><svg width="16" height="10" viewBox="0 0 16 10"><path d="M.700 9.300L8 1.500l7.300 7.800" fill="none" stroke="#fff" stroke-width="1.500"/></svg></span>
    <span><svg width="20" height="17" viewBox="0 0 20 17" fill="none" stroke="#fff" stroke-width="1.200"><path d="M6 1h13v12H3V7M1 1h4v4H1zM2.500 5v2M11 13v3M7 16h8"/></svg></span>
    <span><svg width="30" height="17" viewBox="0 0 30 17" fill="none" stroke="#fff"><path d="M.600.600h28.800v15.800H.600z" stroke-width="1.200"/><path d="M3.500 4.500h23M3.500 8.500h23" stroke-width="1.500" stroke-dasharray="2 1.500"/><path d="M3.500 12.500h2M7.500 12.500h15M24.500 12.500h2" stroke-width="1.500"/></svg></span>
    <span class="zh">中</span>
    <span><i class="bo">ㄅ</i></span>
    <div class="clock">下午 02:18<br>2021/3/7</div>
    <span class="note"><svg width="20" height="21" viewBox="0 0 20 21"><path d="M0 0h20v15h-8v4l-4-4H0z" fill="#fff"/><path d="M3 4h14M3 7.500h14M3 11h8" stroke="#222" stroke-width="1.300"/><path d="M18 10q3 9-7 9 7 5 9-3 0-4-2-6z" fill="#fff" stroke="#222"/></svg></span>
    <i class="peek"></i>
  </div>
</footer>
</body>
</html>
```
FILE: styles.css
```css
* { box-sizing: border-box; }
body {
  margin: 0;
  width: 1920px;
  height: 1080px;
  overflow: hidden;
  font: 14.67px/19px "Open Sans", "Noto Sans CJK TC", sans-serif;
  color: #2b2b2b;
  display: flex;
  flex-direction: column;
}
svg { display: block; flex: none; }
svg text { font-family: "Liberation Sans", sans-serif; }
.defs { position: absolute; }
.c { fill: #dcdcdc; }
.c.dim { fill: #aaa; }
.k { fill: #333; }
i, em { font-style: normal; }

.titlebar { height: 32px; background: #515151; display: flex; color: #d6d6d6; flex: none; }
.qat, .info { display: grid; height: 26px; }
.qat { grid-template-columns: 28px 38px 12px 29px 31px 30px 14px 33px 11px 14px 24px 33px 15px 28px 14px 34px 26px 128px 28px 127px 29px 30px 31px 28px 22px; }
.qat > span, .info > span { display: flex; align-items: center; justify-content: center; }
.qat > span:first-child { padding-top: 3px; }
.vsep { width: 1px; height: 26px; background: #8a8a8a; }
.combo { background: #989898; height: 22px; margin: 2px 0 0 auto; width: 125px; display: flex; align-items: center; justify-content: space-between; padding: 2px 3px 0 7px; fill: #4a4a4a; }
.combo em { font-style: italic; font-size: 13.5px; color: #7b7b7b; transform: skewX(-6deg); }
.combo svg { margin-top: -2px; }
.qat .fx { font: italic 700 20px/20px "Liberation Serif", serif; color: #1e1e1e; align-items: flex-start; }
.fx sub { font-size: 14px; line-height: 30px; }
.apptitle { margin-left: 90px; width: 274px; line-height: 27px; letter-spacing: .18px; white-space: nowrap; }
.docname { width: 126px; line-height: 27px; }
.info { grid-template-columns: 15px 227px 28px 102px 20px 31px 13px 27px 24px 46px 31px 29px; }
.search { background: #989898; margin: 1px 0 1px 2px; padding-left: 7px; line-height: 23px; height: 24px; color: #d8d8d8; letter-spacing: .15px; }
.user { line-height: 25px; padding-left: 3px; letter-spacing: .35px; }
.info > .min { padding: 10px 0 0 16px; }
.lt { color: #ddd; }

.tabs { height: 25px; background: #515151; display: flex; align-items: center; color: #d6d6d6; flex: none; }
.tabs b { font-weight: 400; padding: 0 12.35px; line-height: 25px; white-space: nowrap; }
.tabs b:nth-child(4) { padding: 0 12px 0 11.5px; }
.tabs .file { background: #f08326; color: #fff; margin-right: 3px; padding: 0 12px; width: 54px; }
.tabs .on { background: #f6f6f6; color: #3c3c3c; width: 52px; padding: 0 11px; margin-right: 2px; }
.rmin { margin: 1px 7px 0 27px; }

.ribbon { height: 119px; background: #f6f6f6; display: flex; flex: none; }
.panel { border-right: 1px solid #d5d5d5; display: flex; flex-direction: column; }
.panel .body { height: 97px; padding-top: 4px; display: flex; }
.panel h4 { margin: 1px 0 0; font-weight: 400; font-size: 14.67px; display: flex; align-items: center; justify-content: center; gap: 8px; fill: #333; }
.panel h4 svg { margin: 1px 1px 0 0; }
.big { width: 48px; display: flex; flex-direction: column; align-items: center; padding-top: 1px; flex: none; }
.big label { margin-top: 4px; text-align: center; white-space: nowrap; }
.big .k { margin-top: 4px; }
.small { margin-top: -1px; }
.small > div { height: 31px; display: flex; align-items: center; gap: 8px; white-space: nowrap; }
.small .off { color: #bcbcbc; }
.p1 { width: 111px; } .p1 .body { padding-left: 3px; } .p1 .big { width: 53.5px; }
.p2 { width: 100px; } .p2 .body { padding-left: 5px; } .p2 .small > div { gap: 6.5px; }
.p3 { width: 226px; } .p3 .body { padding-left: 2px; } .p3 .small { margin-left: 3px; }
.p4 { width: 70px; } .p4 .body { padding-left: 5px; } .p4 .small > div { gap: 6px; }
.p5 { width: 102px; } .p5 .body { padding-left: 2px; }
.p6 { width: 94px; } .p6 .body { padding-left: 16px; } .p6 .big { width: 59px; }
.p6 .side { margin: 67px 0 0 5px; }
.p7 { width: 143px; } .p7 .body { padding-left: 7px; } .p7 .small { margin-left: 8px; } .p7 .small > div { gap: 7.5px; }
.p8 { width: 106px; } .p8 .body { padding-left: 1px; } .p8 .big { width: 49.5px; }
.bigfx { height: 42px; font: italic 400 42px/36px "Liberation Serif", serif; color: #3d4450; -webkit-text-stroke: .5px #3d4450; }
.bigfx sub { font-size: 32px; line-height: 10px; vertical-align: -6px; }
.filter { width: 43px; height: 27px; margin: 4px 0 0 3px; border: 1px solid #c6c6c6; display: flex; align-items: center; gap: 9px; padding-left: 3px; }

main { height: 825px; display: flex; flex: none; }
aside { width: 245px; background: #fff; border-right: 4px solid #515151; color: #000; font-family: "Noto Sans", "Noto Sans CJK TC", sans-serif; font-size: 12.5px; }
.phead { height: 24px; background: #606060; display: flex; align-items: center; }
.ptab { width: 59px; height: 24px; background: #fff; display: flex; align-items: center; gap: 11px; padding-left: 2px; font-size: 14.67px; color: #444; }
.plus { margin: 0 auto 0 5.5px; }
.mag { margin-right: 9px; }
.phead > svg:last-child { margin-right: 6px; }
.mode { height: 42px; padding: 0 0 2px 7px; display: flex; align-items: center; gap: 7px; }
.mode a { color: #1296db; }
.mode i { width: 2px; height: 17px; background: #777; margin-right: 2px; }
.tree { list-style: none; margin: 0; padding: 0; letter-spacing: .25px; }
.tree li { height: 25px; display: flex; align-items: center; padding-left: 1px; white-space: pre; }
.tree li > svg { width: 20px; height: 20px; margin: 0 4px 0 2px; }
.tree .root { font-weight: 700; padding-left: 0; letter-spacing: 0; }
.tree i { width: 20px; height: 25px; flex: none; display: flex; align-items: center; justify-content: center; }
.l { background: repeating-linear-gradient(#777 0 1px, transparent 1px 2px) 9px 0 / 1px 25px no-repeat; }
.l.e { background-size: 1px 13px; }
.l.t::after { content: ""; width: 10px; height: 1px; margin-left: 10px; background: repeating-linear-gradient(90deg, #777 0 1px, transparent 1px 2px); }
.l.r::after, .l.d::after { content: ""; width: 7.5px; height: 7.5px; border: solid #9a9a9a; border-width: 2.500px 2.500px 0 0; transform: rotate(45deg); margin-left: -7px; outline: 3px solid #fff; background: #fff; }
.l.d::after { border-color: #333; transform: rotate(135deg); margin: -5px 0 0 -2px; }
.faint { opacity: .5; }

.work { width: 1675px; }
.scene {
  background:
    linear-gradient(rgba(194,195,200,0) 52%, rgba(194,195,200,.14) 62%, rgba(194,195,200,.38) 73%, rgba(194,195,200,.78) 86%, #c3c4c9 100%),
    radial-gradient(ellipse 1010px 860px at 850px 350px, #a1abc0 0%, #9aa5ba 22%, #808ba2 46%, #616b7c 70%, #404756 94%, #3d4453 100%);
}
.docs { height: 30px; background: #606060; display: flex; align-items: stretch; color: #dcdcdc; }
.docs .arr { width: 150px; border-right: 1px solid #999; display: flex; align-items: center; padding-left: 5px; gap: 10px; }
.arr path { fill: none; stroke: #bdbdbd; stroke-width: 1.5; }
.arr .up { margin-left: 4px; }
.arr .up path { fill: #dedede; stroke: none; }
.docs b { font-weight: 400; padding: 0 13px; line-height: 30px; letter-spacing: .02px; white-space: nowrap; }
.docs .arr + b { padding-left: 12px; }
.docs .on { background: #f6f6f6; color: #444; display: flex; align-items: center; gap: 9px; padding: 0 0 0 10px; width: 82px; }
.docs .last { padding-left: 11px; }

.status { height: 29px; background: #f6f6f6; display: flex; line-height: 30px; color: #111; flex: none; }
.status span { width: 1842px; flex: none; }
.status b { font-weight: 400; width: 40px; flex: none; border-left: 1px solid #ccc; padding-left: 11px; margin-top: 2px; line-height: 26px; }
.status b:last-child { padding-left: 8px; }

footer { height: 50px; background: linear-gradient(90deg, transparent 1370px, #3c332a 1450px, #352d25 1500px, transparent 1545px), #1f1e1d; display: flex; color: #fff; flex: none; }
.apps { display: grid; grid-template-columns: 60px 61px 66px 57px 66px 59px 65px 60px 63px 62px; width: 1499px; flex: none; }
.apps span { display: flex; align-items: center; justify-content: center; }
.apps .run { background: linear-gradient(#5b97c8, #5b97c8) center bottom / 51px 3px no-repeat; }
.apps .more { background-size: 49px 3px; }
.apps .cur { background-color: #4b4b4b; background-size: 62px 3px; }
.tray { display: grid; grid-template-columns: 62px 30px 24px 36px 34px 34px 36px 106px 53px 1px; align-items: center; flex: none; }
.tray > span { display: flex; justify-content: center; align-items: center; }
.tray .note { padding-right: 17px; }
.bat { width: 61px; height: 25px; margin-top: -2px; border: 3px solid #fff; background: #189b48; text-align: center; font-size: 16.5px; line-height: 17px; }
.zh { font-size: 17px; }
.bo { width: 18px; height: 18px; background: #fff; color: #111; font-size: 14px; line-height: 17px; text-align: center; }
.clock { text-align: center; line-height: 23px; font-size: 15px; white-space: nowrap; }
.peek { width: 1px; height: 50px; background: #777; }
```
